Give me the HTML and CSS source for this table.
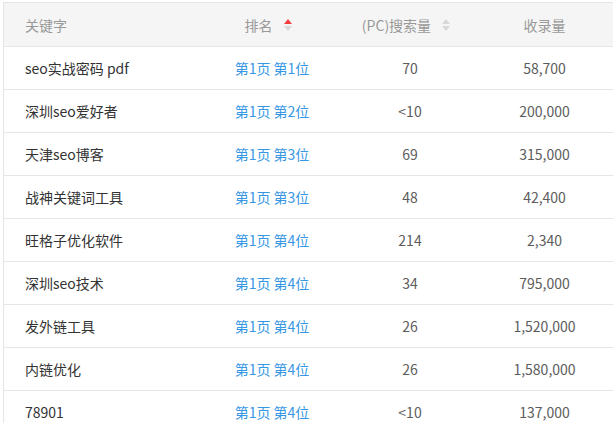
FILE: index.html
```html
<!DOCTYPE html>
<html lang="zh-CN">
<head>
<meta charset="utf-8">
<link rel="stylesheet" href="styles.css">
</head>
<body>
<div class="table">
  <div class="row head">
    <div class="cell kw">关键字</div>
    <div class="cell c">排名<span class="sort"><i class="up on"></i><i class="down"></i></span></div>
    <div class="cell c">(PC)搜索量<span class="sort"><i class="up"></i><i class="down"></i></span></div>
    <div class="cell c">收录量</div>
  </div>
  <div class="row"><div class="cell kw">seo实战密码 pdf</div><div class="cell c link">第1页 第1位</div><div class="cell c num">70</div><div class="cell c num">58,700</div></div>
  <div class="row"><div class="cell kw">深圳seo爱好者</div><div class="cell c link">第1页 第2位</div><div class="cell c num">&lt;10</div><div class="cell c num">200,000</div></div>
  <div class="row"><div class="cell kw">天津seo博客</div><div class="cell c link">第1页 第3位</div><div class="cell c num">69</div><div class="cell c num">315,000</div></div>
  <div class="row"><div class="cell kw">战神关键词工具</div><div class="cell c link">第1页 第3位</div><div class="cell c num">48</div><div class="cell c num">42,400</div></div>
  <div class="row"><div class="cell kw">旺格子优化软件</div><div class="cell c link">第1页 第4位</div><div class="cell c num">214</div><div class="cell c num">2,340</div></div>
  <div class="row"><div class="cell kw">深圳seo技术</div><div class="cell c link">第1页 第4位</div><div class="cell c num">34</div><div class="cell c num">795,000</div></div>
  <div class="row"><div class="cell kw">发外链工具</div><div class="cell c link">第1页 第4位</div><div class="cell c num">26</div><div class="cell c num">1,520,000</div></div>
  <div class="row"><div class="cell kw">内链优化</div><div class="cell c link">第1页 第4位</div><div class="cell c num">26</div><div class="cell c num">1,580,000</div></div>
  <div class="row"><div class="cell kw">78901</div><div class="cell c link">第1页 第4位</div><div class="cell c num">&lt;10</div><div class="cell c num">137,000</div></div>
</div>
</body>
</html>
```
FILE: styles.css
```css
html, body { margin: 0; padding: 0; background: #fff; }
body {
  font-family: "Noto Sans CJK SC", "Noto Sans", sans-serif;
  font-size: 14px;
  color: #333;
  overflow: hidden;
}
.table {
  margin: 2px 0 0 3px;
  border-top: 1px solid #e6e6e6;
  border-left: 1px solid #e6e6e6;
  width: 609px;
}
.row {
  display: grid;
  grid-template-columns: 196px 144px 132px 137px;
  height: 42px;
  border-bottom: 1px solid #e6e6e6;
  align-items: center;
}
.row.head {
  height: 43px;
  background: #f5f5f5;
  color: #999;
}
.cell { white-space: nowrap; line-height: 20px; }
.kw { padding-left: 21px; }
.c { text-align: center; }
.head .c { display: flex; justify-content: center; align-items: center; }
.link { color: #3797e4; }
.num { color: #5c5c5c; }
.sort {
  display: inline-flex;
  flex-direction: column;
  gap: 2px;
  margin-left: 11px;
}
.sort i {
  display: block;
  width: 0; height: 0;
  border-left: 4.5px solid transparent;
  border-right: 4.5px solid transparent;
}
.sort .up { border-bottom: 5px solid #d8d8d8; }
.sort .down { border-top: 5px solid #d8d8d8; }
.sort .up.on { border-bottom-color: #f23c3c; }
.row.head .cell:nth-child(2) { padding-right: 8px; }
.row.head .cell:nth-child(3) { padding-right: 8px; }
```
